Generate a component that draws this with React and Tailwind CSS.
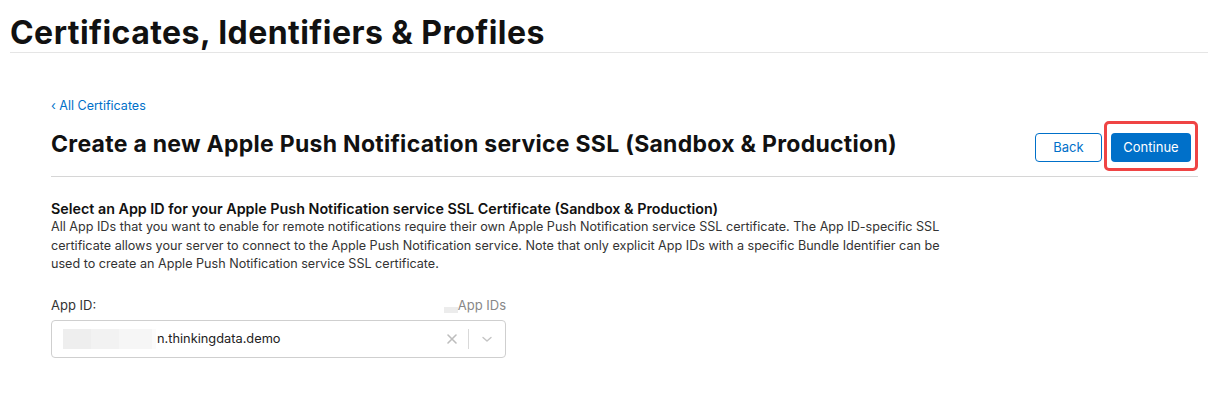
import React from "react";

export default function App() {
  return (
    <div className="w-[1208px] h-[420px] bg-white overflow-hidden text-[#111]" style={{ fontFamily: "Inter, 'Liberation Sans', sans-serif" }}>
      {/* Top header */}
      <div className="ml-[10px] pt-[14px] border-b border-[#e5e5e5]">
        <h1 className="text-[32px] leading-[38px] font-bold tracking-[0.45px] text-[#111]">Certificates, Identifiers &amp; Profiles</h1>
      </div>

      <div className="pl-[51px] pr-[10px] pt-[44px]">
        <a href="#" className="text-[12.5px] leading-[18px] text-[#0070c9] block">‹ All Certificates</a>

        {/* Title row */}
        <div className="flex items-start justify-between mt-[6px] pb-[5px] border-b border-[#d6d6d6]">
          <h2 className="mt-[9px] text-[23px] leading-[28px] font-bold tracking-[0.28px] text-[#111]">
            Create a new Apple Push Notification service SSL (Sandbox &amp; Production)
          </h2>
          <div className="flex items-start gap-[2px]">
            <button className="mt-[12px] w-[67px] h-[29px] rounded-[4px] border border-[#0070c9] text-[#0070c9] text-[13px]">Back</button>
            <div className="px-[4px] pt-[9px] pb-[6px] rounded-[5px] border-[3px] border-[#ef4444]">
              <button className="block w-[80px] h-[29px] rounded-[4px] bg-[#0070c9] text-white text-[13px]">Continue</button>
            </div>
          </div>
        </div>

        {/* Section */}
        <div className="mt-[22px]">
          <h3 className="text-[14.3px] leading-[19px] font-semibold text-[#111]">
            Select an App ID for your Apple Push Notification service SSL Certificate (Sandbox &amp; Production)
          </h3>
          <p className="text-[12.6px] leading-[18.5px] text-[#333] w-[900px]">
            All App IDs that you want to enable for remote notifications require their own Apple Push Notification service SSL certificate. The App ID-specific SSL certificate allows your server to connect to the Apple Push Notification service. Note that only explicit App IDs with a specific Bundle Identifier can be used to create an Apple Push Notification service SSL certificate.
          </p>
        </div>

        {/* App ID select */}
        <div className="mt-[22px] w-[455px]">
          <div className="flex items-end justify-between">
            <span className="text-[13px] leading-[18px] text-[#333]">App ID:</span>
            <span className="flex items-center text-[13px] leading-[18px] text-[#888]">
              <span className="w-[14px] h-[6px] bg-[#ececec] mt-[10px]" />
              App IDs
            </span>
          </div>
          <div className="mt-[6px] h-[38px] border border-[#cfcfcf] rounded-[4px] flex items-center">
            <div className="flex-1 flex items-center pl-[11px]">
              <span className="w-[28px] h-[20px] bg-[#eeeeee]" />
              <span className="w-[28px] h-[20px] bg-[#f2f2f2]" />
              <span className="w-[33px] h-[20px] bg-[#f6f6f6]" />
              <span className="w-[4px] h-[20px] bg-[#fbfbfb]" />
              <span className="text-[12.8px] text-[#222] ml-[1px]">n.thinkingdata.demo</span>
            </div>
            <div className="flex items-center h-full">
              <svg className="w-[12px] h-[12px] mr-[10px]" viewBox="0 0 12 12" fill="none" stroke="#bdbdbd" strokeWidth="1.6" strokeLinecap="round">
                <path d="M2 2l8 8M10 2l-8 8" />
              </svg>
              <span className="w-px h-[20px] bg-[#d9d9d9]" />
              <svg className="w-[12px] h-[12px] mx-[12px]" viewBox="0 0 12 12" fill="none" stroke="#c4c4c4" strokeWidth="1.4" strokeLinecap="round" strokeLinejoin="round">
                <path d="M2 4.5l4 3.5 4-3.5" />
              </svg>
            </div>
          </div>
        </div>
      </div>
    </div>
  );
}
